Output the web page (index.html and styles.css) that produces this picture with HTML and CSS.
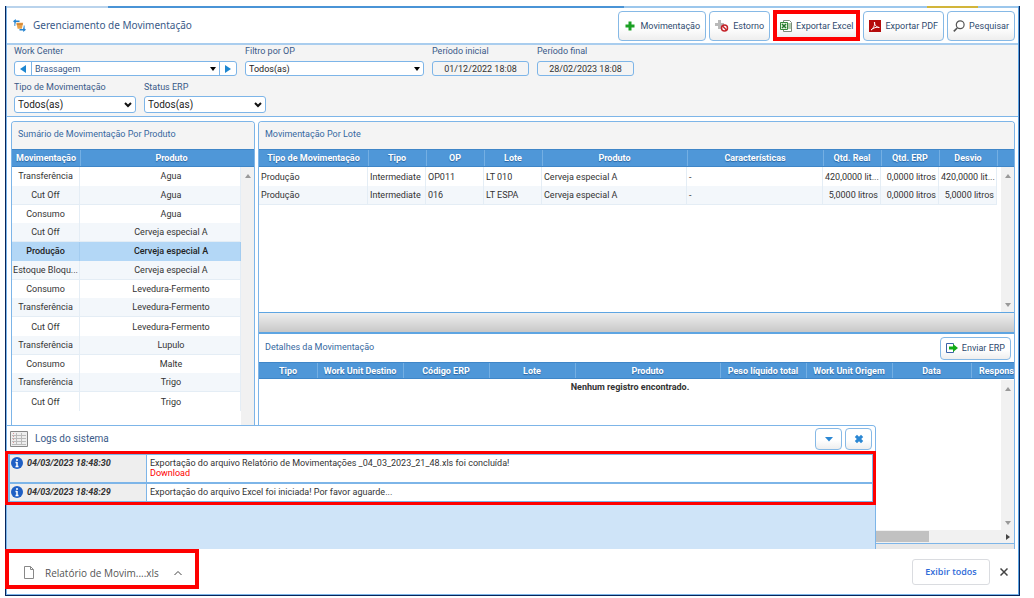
FILE: index.html
```html
<!DOCTYPE html>
<html lang="pt-BR">
<head>
<meta charset="utf-8">
<title>Gerenciamento de Movimentação</title>
<link rel="stylesheet" href="styles.css">
</head>
<body>
<div class="frame">
  <div class="tab-strip"></div>
  <header class="header">
    <svg class="header-icon" viewBox="0 0 14 14"><path d="M3.500 4h7.500l-1.500 6.500H5z" fill="#e9a24a"/><path d="M4 5.500h6.500" stroke="#c9772a"/><path d="M0 2.500 3 0v1.700h4v1.600H3V5zM14 11.500 11 9v1.700H7v1.600h4V14z" fill="#2583cf"/><path d="M2 4v3.500M12 7v3" stroke="#2583cf"/></svg>
    <h1 class="title">Gerenciamento de Movimentação</h1>
    <div class="toolbar">
      <button class="btn" type="button"><svg class="ico" viewBox="0 0 12 12"><path d="M4.500 1.500h3v3h3v3h-3v3h-3v-3h-3v-3h3z" fill="#1ba024"/></svg>Movimentação</button>
      <button class="btn" type="button"><svg class="ico wide" viewBox="0 0 14 12"><path d="M3 0h3v3h3v3H6v3H3V6H0V3h3z" fill="#b9b9b9"/><circle cx="9.500" cy="8" r="3" fill="#fff" stroke="#c42229" stroke-width="1.500"/><path d="m7.500 6 4 4" stroke="#c42229" stroke-width="1.500"/></svg>Estorno</button>
      <span class="mark"><button class="btn" type="button"><svg class="ico" viewBox="0 0 12 12"><path d="M3.500.5h6l2 2v9h-8z" fill="#fff" stroke="#7b8b7b"/><path d="M8 4h3M8 6h3M8 8h3" stroke="#6a9d60"/><path d="M.5 2.500h7v7h-7z" fill="#e5f3df" stroke="#36883b"/><path d="m2 4 4 4M6 4 2 8" stroke="#21752b" stroke-width="1.500"/></svg>Exportar Excel</button></span>
      <button class="btn" type="button"><svg class="ico" viewBox="0 0 12 12"><path d="M0 0h12v12H0z" fill="#b50b0b"/><path d="M2 10c2-1 4.500-5.500 3.500-8-.8 2 2 5.500 4.800 5.500C8 6.500 4 8 2 10z" fill="none" stroke="#fff"/></svg>Exportar PDF</button>
      <button class="btn" type="button"><svg class="ico" viewBox="0 0 12 12"><circle cx="7.200" cy="4.800" r="3.900" fill="none" stroke="#555" stroke-width="1.200"/><path d="M4.200 8 .8 11.300" stroke="#555" stroke-width="1.700"/></svg>Pesquisar</button>
    </div>
  </header>

  <form class="filters">
    <div class="filter-row">
      <div class="field w-center">
        <label for="wc">Work Center</label>
        <div class="stepper">
          <button class="step" type="button" aria-label="Anterior"><svg viewBox="0 0 6 8"><path d="M6 0v8L0 4z"/></svg></button>
          <div class="select"><select id="wc" class="tint"><option>Brassagem</option></select><svg class="arrow" viewBox="0 0 6 4"><path d="M0 0h6L3 4z"/></svg></div>
          <button class="step" type="button" aria-label="Próximo"><svg viewBox="0 0 6 8"><path d="M0 0v8l6-4z"/></svg></button>
        </div>
      </div>
      <div class="field w-op">
        <label for="op">Filtro por OP</label>
        <div class="select boxed"><select id="op"><option>Todos(as)</option></select><svg class="arrow" viewBox="0 0 6 4"><path d="M0 0h6L3 4z"/></svg></div>
      </div>
      <div class="field w-date"><label for="d1">Período inicial</label><input id="d1" class="date" type="text" value="01/12/2022 18:08"></div>
      <div class="field w-date"><label for="d2">Período final</label><input id="d2" class="date" type="text" value="28/02/2023 18:08"></div>
    </div>
    <div class="filter-row">
      <div class="field w-type">
        <label for="tm">Tipo de Movimentação</label>
        <div class="select boxed big"><select id="tm"><option>Todos(as)</option></select><svg class="chevron" viewBox="0 0 8 6"><path d="m1 1 3 3 3-3"/></svg></div>
      </div>
      <div class="field w-type">
        <label for="st">Status ERP</label>
        <div class="select boxed big"><select id="st"><option>Todos(as)</option></select><svg class="chevron" viewBox="0 0 8 6"><path d="m1 1 3 3 3-3"/></svg></div>
      </div>
    </div>
  </form>

  <main class="main">
    <section class="panel summary">
      <h2 class="panel-head">Sumário de Movimentação Por Produto</h2>
      <div class="grid-area">
        <table class="table zebra centered summary-table">
          <colgroup><col class="c-68"><col><col class="c-13"></colgroup>
          <thead><tr><th>Movimentação</th><th>Produto</th><th class="bare"></th></tr></thead>
          <tbody>
            <tr><td>Transferência</td><td>Agua</td></tr>
            <tr><td>Cut Off</td><td>Agua</td></tr>
            <tr><td>Consumo</td><td>Agua</td></tr>
            <tr><td>Cut Off</td><td>Cerveja especial A</td></tr>
            <tr class="selected"><td>Produção</td><td>Cerveja especial A</td></tr>
            <tr><td>Estoque Bloqu...</td><td>Cerveja especial A</td></tr>
            <tr><td>Consumo</td><td>Levedura-Fermento</td></tr>
            <tr><td>Transferência</td><td>Levedura-Fermento</td></tr>
            <tr><td>Cut Off</td><td>Levedura-Fermento</td></tr>
            <tr><td>Transferência</td><td>Lupulo</td></tr>
            <tr><td>Consumo</td><td>Malte</td></tr>
            <tr><td>Transferência</td><td>Trigo</td></tr>
            <tr><td>Cut Off</td><td>Trigo</td></tr>
          </tbody>
        </table>
        <div class="vscroll"><svg viewBox="0 0 6 4"><path d="M0 4h6L3 0z"/></svg></div>
      </div>
    </section>

    <section class="panel detail">
      <h2 class="panel-head">Movimentação Por Lote</h2>
      <div class="grid-area lots">
        <table class="table zebra">
          <colgroup><col class="c-109"><col class="c-58"><col class="c-58"><col class="c-58"><col><col class="c-136"><col class="c-58"><col class="c-58"><col class="c-58"><col class="c-17"></colgroup>
          <thead><tr><th>Tipo de Movimentação</th><th>Tipo</th><th>OP</th><th>Lote</th><th>Produto</th><th>Características</th><th>Qtd. Real</th><th>Qtd. ERP</th><th>Desvio</th><th></th></tr></thead>
          <tbody>
            <tr><td>Produção</td><td>Intermediate</td><td>OP011</td><td>LT 010</td><td>Cerveja especial A</td><td>-</td><td class="num">420,0000 lit...</td><td class="num">0,0000 litros</td><td class="num">420,0000 lit...</td></tr>
            <tr><td>Produção</td><td>Intermediate</td><td>016</td><td>LT ESPA</td><td>Cerveja especial A</td><td>-</td><td class="num">5,0000 litros</td><td class="num">0,0000 litros</td><td class="num">5,0000 litros</td></tr>
          </tbody>
        </table>
        <div class="vscroll"><svg viewBox="0 0 6 4"><path d="M0 4h6L3 0z"/></svg><svg viewBox="0 0 6 4"><path d="M0 0h6L3 4z"/></svg></div>
      </div>
      <div class="splitter"></div>
      <div class="sub-head">
        <h2>Detalhes da Movimentação</h2>
        <button class="btn small" type="button"><svg class="ico" viewBox="0 0 12 12"><path d="M7.500 3V1.500h-7v9h7V9" fill="#fff" stroke="#3b62a8"/><path d="M3 4.500h4V2l5 4-5 4V7.500H3z" fill="#12ac17"/></svg>Enviar ERP</button>
      </div>
      <div class="grid-area moves">
        <table class="table moves-table">
          <colgroup><col class="c-58"><col class="c-86"><col class="c-86"><col class="c-86"><col><col class="c-86"><col class="c-86"><col class="c-79"><col class="c-43"></colgroup>
          <thead><tr><th>Tipo</th><th>Work Unit Destino</th><th>Código ERP</th><th>Lote</th><th>Produto</th><th>Peso líquido total</th><th>Work Unit Origem</th><th>Data</th><th class="last">Respons</th></tr></thead>
        </table>
        <p class="empty">Nenhum registro encontrado.</p>
        <div class="vscroll"><svg viewBox="0 0 6 4"><path d="M0 4h6L3 0z"/></svg><svg viewBox="0 0 6 4"><path d="M0 0h6L3 4z"/></svg></div>
      </div>
      <div class="hscroll"><div class="thumb"></div><svg viewBox="0 0 4 6"><path d="M0 0v6l4-3z"/></svg></div>
      <div class="panel-foot"></div>
    </section>

    <section class="logs">
      <div class="logs-head">
        <svg class="logs-icon" viewBox="0 0 18 16"><path d="M.5.5h17v15H.5z" fill="#eee" stroke="#888"/><path d="M2 4.500h14M2 7.500h14M2 10.500h14M2 13.500h14M6.500 2v12M11.500 2v12" stroke="#bbb"/><path d="M3.500 2v12" stroke="#d99" stroke-dasharray="1 2"/></svg>
        <h2>Logs do sistema</h2>
        <button class="btn square" type="button" aria-label="Minimizar"><svg viewBox="0 0 10 10"><path d="M1 3h8L5 7.500z"/></svg></button>
        <button class="btn square" type="button" aria-label="Fechar"><svg viewBox="0 0 10 10"><path d="M3 .8 5 2.800 7 .8 9.200 3 7.200 5l2 2L7 9.200l-2-2-2 2L.8 7l2-2-2-2z"/></svg></button>
      </div>
      <div class="log-list">
        <div class="log">
          <div class="log-time"><svg viewBox="0 0 12 12"><circle cx="6" cy="6" r="6" fill="#1f5fc4"/><path d="M6 2v2M6 5v5M4.500 5.500H6M4.500 9.500h3" stroke="#fff" stroke-width="1.500"/></svg>04/03/2023 18:48:30</div>
          <div class="log-text">Exportação do arquivo Relatório de Movimentações _04_03_2023_21_48.xls foi concluída!<br><a href="#">Download</a></div>
        </div>
        <div class="log">
          <div class="log-time"><svg viewBox="0 0 12 12"><circle cx="6" cy="6" r="6" fill="#1f5fc4"/><path d="M6 2v2M6 5v5M4.500 5.500H6M4.500 9.500h3" stroke="#fff" stroke-width="1.500"/></svg>04/03/2023 18:48:29</div>
          <div class="log-text">Exportação do arquivo Excel foi iniciada! Por favor aguarde...</div>
        </div>
      </div>
    </section>
  </main>

  <footer class="downloads">
    <button class="file" type="button">
      <svg class="doc" viewBox="0 0 10 13"><path d="M.5.5h6l3 3v9h-9z" fill="#fff" stroke="#888"/><path d="M6.500.5v3h3" fill="none" stroke="#888"/></svg>
      Relatório de Movim....xls
      <svg class="up" viewBox="0 0 8 6"><path d="m.5 5 3.500-3.500L7.500 5"/></svg>
    </button>
    <button class="show-all" type="button">Exibir todos</button>
    <button class="close" type="button" aria-label="Fechar"><svg viewBox="0 0 8 8"><path d="m.5.5 7 7m0-7-7 7"/></svg></button>
  </footer>
</div>
</body>
</html>
```
FILE: styles.css
```css
* { box-sizing: border-box; }

body {
  margin: 0;
  min-height: 100vh;
  padding: 6px 14px 2px 5px;
  display: flex;
  background: #fff;
  font: 9px/12px Roboto, "Liberation Sans", sans-serif;
  color: #333;
}

h1, h2, p { margin: 0; font-weight: 400; }
button, select, input { font: inherit; color: inherit; margin: 0; }
svg { display: block; flex: none; }

.frame {
  flex: 1;
  min-width: 0;
  display: flex;
  flex-direction: column;
  border: solid #06255c;
  border-width: 0 1px 1px;
  box-shadow: inset 1px 0 #7db5e8, inset -1px 0 #5ba3e2, inset 0 -1px #7db5e8;
  padding: 0 1px 1px;
}

.tab-strip {
  height: 2px;
  background: linear-gradient(90deg, #b9d3ec 10%, #4a94d6 10% 61%, #9cc7ec 61% 91%, #d2b53a 91% 96%, #9cc7ec 96%);
}

.header {
  display: flex;
  align-items: center;
  height: 37px;
  padding: 0 3px 0 6px;
  border-bottom: 2px solid #a9cdee;
}
.header-icon { width: 13px; height: 13px; margin-right: 7px; }
.title { flex: 1; font: 10px/16px "Noto Sans", sans-serif; color: #3a5a88; padding-bottom: 2px; }

.toolbar { display: flex; align-items: center; gap: 3px; }
.btn {
  display: flex;
  align-items: center;
  justify-content: center;
  gap: 4px;
  height: 30px;
  padding: 0 5px;
  border: 1px solid #86b9e6;
  border-radius: 4px;
  background: linear-gradient(#fff 55%, #eee);
  color: #2f4a6e;
  white-space: nowrap;
}
.ico { width: 12px; height: 12px; }
.ico.wide { width: 14px; }
.mark { border: 4px solid #fe0000; }
.mark .btn { height: 23px; padding: 0 3px; border: 0; border-radius: 0; }

.filters {
  height: 72px;
  padding: 0 7px;
  background: #f4f4f4;
  border-bottom: 1px solid #7db5e8;
}
.filter-row { display: flex; gap: 8px; }
.filter-row + .filter-row { margin-top: 5px; }
.field label { display: block; line-height: 12px; margin-bottom: 4px; color: #3a5a88; }
.filter-row + .filter-row label { margin-bottom: 3px; }
.w-center { width: 223px; }
.w-op { width: 179px; }
.w-date { width: 97px; }
.w-type { width: 122px; }

.stepper, .boxed, .date {
  border: 1px solid #7db5e8;
  border-radius: 3px;
  background: #fff;
  height: 15px;
}
.stepper { display: flex; }
.stepper .select { flex: 1; border: solid #7db5e8; border-width: 0 1px; }
.step { width: 16px; padding: 0; border: 0; background: none; display: grid; place-items: center; }
.step svg { width: 6px; height: 8px; fill: #1d86d0; }
.select { display: grid; align-items: center; }
.select select {
  grid-area: 1 / 1;
  appearance: none;
  width: 100%;
  height: 13px;
  padding: 0 3px;
  border: 0;
  background: none;
  line-height: 12px;
  color: #222;
}
.select select.tint { color: #3a5a88; }
.select svg { grid-area: 1 / 1; justify-self: end; margin-right: 3px; pointer-events: none; }
.arrow { width: 6px; height: 4px; }
.big { height: 17px; }
.big select { height: 15px; font-size: 10px; }
.chevron { width: 8px; height: 6px; fill: none; stroke: #111; stroke-width: 2; }
.date { width: 100%; padding: 0; background: #f4f4f4; text-align: center; display: block; }

.main {
  flex: 1;
  position: relative;
  display: flex;
  gap: 3px;
  padding: 4px 3px 0 4px;
}
.panel { display: flex; flex-direction: column; border: 1px solid #7db5e8; border-bottom: 0; border-radius: 4px 4px 0 0; }
.summary { width: 244px; }
.detail { flex: 1; min-width: 0; }
.panel-head { height: 27px; padding: 0 6px; font-size: 9px; line-height: 25px; background: #f4f4f4; color: #3668a0; border-radius: 3px 3px 0 0; }

.grid-area { position: relative; overflow: hidden; }
.summary .grid-area { flex: 1; }
.lots { height: 163px; }
.moves { flex: 1; }
.table { width: 100%; table-layout: fixed; border-collapse: separate; border-spacing: 0; }
.summary-table { height: 262px; }
.c-13 { width: 13px; } .c-17 { width: 17px; } .c-43 { width: 43px; } .c-58 { width: 58px; } .c-68 { width: 68px; }
.c-79 { width: 79px; } .c-86 { width: 86px; } .c-109 { width: 109px; } .c-136 { width: 136px; }
.table th {
  height: 18px;
  padding: 0;
  background: #4f97d8;
  border: solid #3f86c8;
  border-width: 1px 0;
  box-shadow: inset 1px 0 #74afe3;
  color: #fff;
  font-weight: 700;
  line-height: 14px;
  white-space: nowrap;
  text-shadow: 0 1px 1px #2a64a0;
}
.table th:first-child, .table th.bare { box-shadow: none; }
.table td { height: 18px; padding: 0 2px; line-height: 14px; white-space: nowrap; overflow: hidden; border-right: 1px solid #e4edf5; }
.lots td { height: 19px; }
.centered td { text-align: center; padding: 0; }
.centered tr > :nth-child(2) { padding-left: 22px; }
.table .num { text-align: right; }
.zebra tr:nth-child(even) td { background: #f3f7fb; border-bottom: 1px solid #e4edf5; }
.zebra .selected td { background: #b3d7f6; border-color: #a3ccf0; color: #222; font-weight: 500; }
.moves-table th { height: 17px; }
.moves-table .last { text-align: right; padding-right: 0; }

.vscroll {
  position: absolute;
  top: 18px;
  right: 0;
  bottom: 0;
  width: 13px;
  padding: 7px 0 5px;
  background: #f1f1f1;
  display: flex;
  flex-direction: column;
  justify-content: space-between;
  align-items: center;
}
.vscroll svg { width: 6px; height: 4px; fill: #999; }
.splitter { height: 22px; border: solid #5ea5e2; border-width: 1px 0 2px; background: linear-gradient(#eee, #c8c8c8); }
.sub-head { display: flex; align-items: center; justify-content: space-between; height: 28px; padding: 0 3px 0 6px; }
.sub-head h2 { font-size: 9px; color: #3668a0; padding-bottom: 2px; }
.btn.small { height: 23px; }
.empty { padding-right: 13px; text-align: center; font-weight: 700; line-height: 17px; }
.hscroll { display: flex; align-items: center; height: 13px; padding: 0 4px 0 12px; justify-content: space-between; background: #f1f1f1; }
.thumb { width: 89%; height: 11px; background: #c1c1c1; }
.hscroll svg { width: 4px; height: 6px; fill: #444; }
.panel-foot { height: 6px; border-top: 1px solid #7db5e8; background: #e8e8e8; }

.logs {
  position: absolute;
  left: 0;
  right: 14%;
  bottom: 0;
  height: 124px;
  background: #cfe4f8;
  border: solid #7db5e8;
  border-width: 1px 1px 0 0;
  border-radius: 0 4px 0 0;
}
.logs-head { display: flex; align-items: center; gap: 3px; height: 25px; padding: 0 3px; background: #fff; border-radius: 0 3px 0 0; }
.logs-head h2 { flex: 1; padding-left: 4px; font-size: 10px; line-height: 14px; color: #3a5a88; }
.logs-icon { width: 18px; height: 16px; }
.btn.square { width: 27px; height: 22px; padding: 0; }
.square svg { width: 10px; height: 10px; fill: #2b87d3; }
.log-list { margin: 0 -1px 0 -2px; border: 3px solid #fe0000; background: #7db5e8; display: grid; gap: 2px; padding: 1px 1px 1px 2px; }
.log { display: flex; gap: 1px; }
.log-time { width: 136px; min-height: 16px; padding: 2px 1px; display: flex; align-items: flex-start; gap: 4px; background: #eee; font-weight: 700; font-style: italic; line-height: 13px; }
.log-time svg { width: 12px; height: 12px; }
.log-text { flex: 1; padding: 3px; background: #fff; line-height: 10px; }
.log:first-child { min-height: 27px; }
.log-text a { color: #fe0000; text-decoration: none; }

.downloads { display: flex; align-items: center; height: 45px; padding-right: 10px; }
.file {
  align-self: flex-start;
  display: flex;
  align-items: center;
  height: 40px;
  width: 194px;
  margin-left: -2px;
  padding: 7px 13px 0 15px;
  border: 4px solid #fe0000;
  background: #fff;
  position: relative;
  font: 10px/16px "Open Sans", sans-serif;
  color: #555;
  white-space: nowrap;
}
.doc { width: 10px; height: 13px; margin-right: 11px; }
.up { width: 8px; height: 6px; margin-left: 15px; fill: none; stroke: #444; }
.show-all { margin-left: auto; height: 26px; width: 78px; padding: 0; border: 1px solid #dadce0; border-radius: 3px; background: #fff; color: #2f6bd8; font: 600 9px/14px "Open Sans", sans-serif; }
.close { margin-left: 10px; padding: 0; border: 0; background: none; }
.close svg { width: 8px; height: 8px; fill: none; stroke: #444; stroke-width: 1.5; }
```
